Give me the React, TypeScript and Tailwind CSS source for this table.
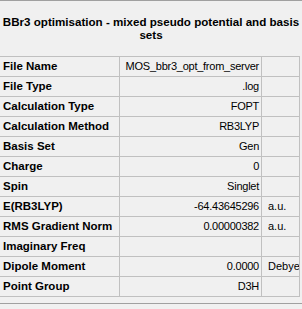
const ROWS: [string, string, string][] = [
  ['File Name', 'MOS_bbr3_opt_from_server', ''],
  ['File Type', '.log', ''],
  ['Calculation Type', 'FOPT', ''],
  ['Calculation Method', 'RB3LYP', ''],
  ['Basis Set', 'Gen', ''],
  ['Charge', '0', ''],
  ['Spin', 'Singlet', ''],
  ['E(RB3LYP)', '-64.43645296', 'a.u.'],
  ['RMS Gradient Norm', '0.00000382', 'a.u.'],
  ['Imaginary Freq', '', ''],
  ['Dipole Moment', '0.0000', 'Debye'],
  ['Point Group', 'D3H', ''],
];

export default function App() {
  return (
    <div
      className="w-[302px] h-[309px] overflow-hidden bg-[#f0f0f0] text-black border-t border-[#a0a0a0]"
      style={{ fontFamily: '"Liberation Sans", Arial, sans-serif' }}
    >
      {/* summary title */}
      <div className="h-[55px] pt-[14px] text-center font-bold text-[11.6px] leading-[13px] whitespace-nowrap">
        <div>BBr3 optimisation - mixed pseudo potential and basis</div>
        <div>sets</div>
      </div>

      {/* property grid */}
      <div className="w-[300px] border-t border-[#c0c0c0]">
        {ROWS.map(([name, value, unit]) => (
          <div key={name} className="flex h-[20px] border-b border-[#c0c0c0]">
            <div className="w-[120px] shrink-0 flex items-center pl-[3px] border-r border-[#c0c0c0] font-bold text-[11.5px] whitespace-nowrap overflow-hidden">
              {name}
            </div>
            <div className="w-[142px] shrink-0 flex items-center justify-end pr-[2px] border-r border-[#c0c0c0] text-[11px] tracking-[-0.25px] whitespace-nowrap overflow-hidden">
              {value}
            </div>
            <div className="w-[38px] shrink-0 flex items-center pl-[6px] border-r border-[#c0c0c0] text-[11px] whitespace-nowrap overflow-hidden">
              {unit}
            </div>
          </div>
        ))}
      </div>

      <div className="mt-[6px] border-t border-[#a0a0a0]" />
    </div>
  );
}
